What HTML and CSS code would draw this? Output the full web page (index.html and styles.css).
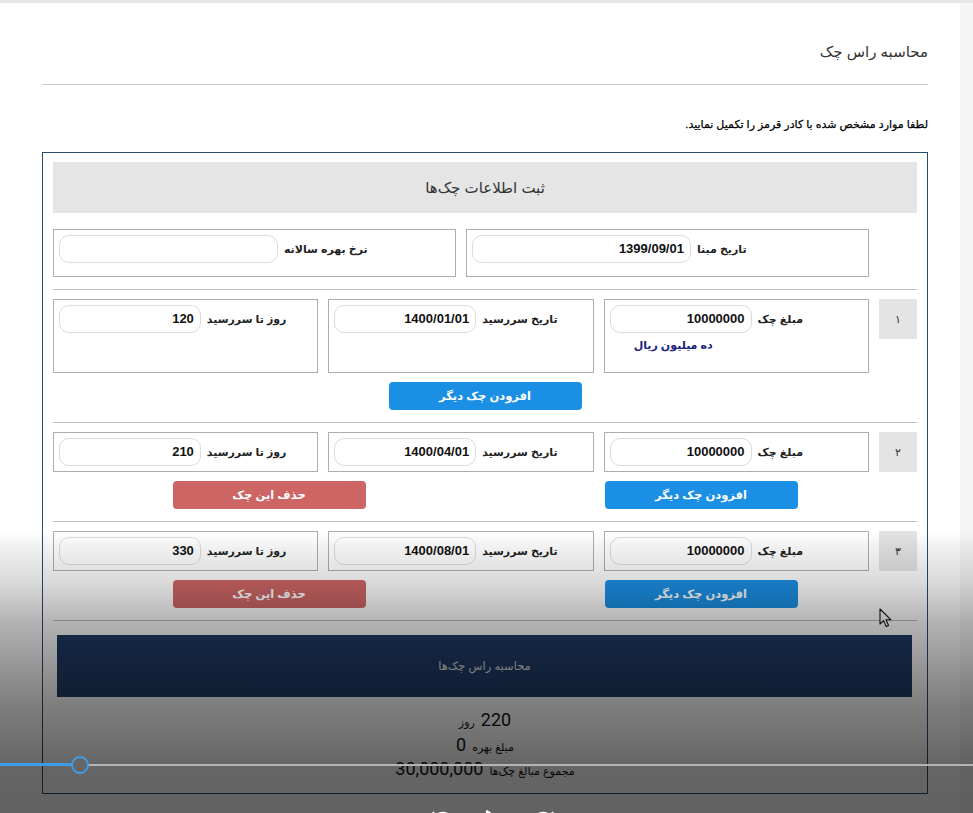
FILE: index.html
```html
<!DOCTYPE html>
<html lang="fa">
<head>
<meta charset="utf-8">
<title>محاسبه راس چک</title>
<link rel="stylesheet" href="styles.css">
</head>
<body>
<div class="screen">
  <div class="window">
    <main class="page" dir="rtl">
      <header class="page-head"><h1>محاسبه راس چک</h1></header>
      <p class="hint">لطفا موارد مشخص شده با کادر قرمز را تکمیل نمایید.</p>

      <section class="panel">
        <div class="panel-title">ثبت اطلاعات چک‌ها</div>

        <div class="row base-row">
          <div class="num-spacer"></div>
          <div class="field"><span class="label">تاریخ مبنا</span><span class="input">1399/09/01</span></div>
          <div class="field"><span class="label">نرخ بهره سالانه</span><span class="input"></span></div>
        </div>

        <div class="check">
          <div class="row check-row">
            <div class="num">۱</div>
            <div class="field stacked">
              <div class="field-line"><span class="label">مبلغ چک</span><span class="input">10000000</span></div>
              <div class="words">ده میلیون ریال</div>
            </div>
            <div class="field"><span class="label">تاریخ سررسید</span><span class="input">1400/01/01</span></div>
            <div class="field"><span class="label">روز تا سررسید</span><span class="input">120</span></div>
          </div>
          <div class="actions single"><button class="btn blue">افزودن چک دیگر</button></div>
        </div>

        <div class="check">
          <div class="row check-row">
            <div class="num">۲</div>
            <div class="field"><span class="label">مبلغ چک</span><span class="input">10000000</span></div>
            <div class="field"><span class="label">تاریخ سررسید</span><span class="input">1400/04/01</span></div>
            <div class="field"><span class="label">روز تا سررسید</span><span class="input">210</span></div>
          </div>
          <div class="actions pair">
            <div class="cell"><button class="btn blue">افزودن چک دیگر</button></div>
            <div class="cell"><button class="btn red">حذف این چک</button></div>
          </div>
        </div>

        <div class="check">
          <div class="row check-row">
            <div class="num">۳</div>
            <div class="field"><span class="label">مبلغ چک</span><span class="input">10000000</span></div>
            <div class="field"><span class="label">تاریخ سررسید</span><span class="input">1400/08/01</span></div>
            <div class="field"><span class="label">روز تا سررسید</span><span class="input">330</span></div>
          </div>
          <div class="actions pair">
            <div class="cell"><button class="btn blue">افزودن چک دیگر</button></div>
            <div class="cell"><button class="btn red">حذف این چک</button></div>
          </div>
        </div>

        <div class="calc-wrap"><button class="calc">محاسبه راس چک‌ها</button></div>

        <div class="results">
          <div class="res-line"><span class="val">220</span><span class="lbl">روز</span></div>
          <div class="res-line"><span class="lbl">مبلغ بهره</span><span class="val">0</span></div>
          <div class="res-line"><span class="lbl">مجموع مبالغ چک‌ها</span><span class="val">30,000,000</span></div>
        </div>
      </section>
    </main>
    <aside class="side-strip"></aside>
  </div>

  <svg class="cursor" width="14" height="20" viewBox="0 0 14 20">
    <path d="M1 1 L1 16 L4.6 12.6 L7.2 18.6 L9.6 17.6 L7 11.8 L12 11.8 Z" fill="#fff" stroke="#111" stroke-width="1.1" stroke-linejoin="round"/>
  </svg>

  <div class="overlay"></div>

  <div class="progress">
    <div class="track"></div>
    <div class="played"></div>
    <div class="knob"></div>
  </div>

  <div class="controls">
    <svg width="26" height="26" viewBox="0 0 26 26"><path d="M6 8 A9 9 0 1 1 4 13" fill="none" stroke="#fff" stroke-width="2"/><path d="M3 4 L6 9 L10 6" fill="none" stroke="#fff" stroke-width="2"/></svg>
    <svg width="26" height="26" viewBox="0 0 26 26"><path d="M7 3 L21 13 L7 23 Z" fill="none" stroke="#fff" stroke-width="2" stroke-linejoin="round"/></svg>
    <svg width="26" height="26" viewBox="0 0 26 26"><path d="M20 8 A9 9 0 1 0 22 13" fill="none" stroke="#fff" stroke-width="2"/><path d="M23 4 L20 9 L16 6" fill="none" stroke="#fff" stroke-width="2"/></svg>
  </div>
</div>
</body>
</html>
```
FILE: styles.css
```css
* { box-sizing: border-box; }
html, body { margin: 0; padding: 0; }
body {
  background: #fff;
  font-family: "Liberation Sans", "DejaVu Sans", sans-serif;
  color: #222;
}
.screen {
  position: relative;
  width: 973px;
  height: 813px;
  overflow: hidden;
  border-top: 3px solid #e6e6e6;
}
.window {
  display: flex;
  height: 100%;
}
.page {
  width: 960px;
  padding: 0 32px 0 42px;
}
.side-strip {
  flex: 1;
  background: #f5f5f5;
}
.page-head {
  height: 82px;
  padding-top: 37px;
  border-bottom: 1px solid #c8c8c8;
}
.page-head h1 {
  margin: 0;
  font-size: 15px;
  font-weight: normal;
  color: #333;
  line-height: 24px;
}
.hint {
  margin: 31px 0 0;
  font-size: 11px;
  font-weight: normal;
  color: #000;
  line-height: 16px;
  -webkit-text-stroke: 0.25px #000;
}
.panel {
  margin-top: 20px;
  border: 1px solid #2a4a70;
  padding: 9px 10px 10px;
}
.panel-title {
  height: 51px;
  background: #e5e5e5;
  display: flex;
  align-items: center;
  justify-content: center;
  font-size: 15px;
  color: #333;
}
.row {
  display: grid;
  gap: 10px;
}
.base-row {
  grid-template-columns: 38px 1fr 1fr;
  margin-top: 16px;
  padding-bottom: 12px;
  border-bottom: 1px solid #bdbdbd;
}
.base-row .field { min-height: 48px; }
.check-row {
  grid-template-columns: 38px 1fr 1fr 1fr;
}
.check {
  padding: 9px 0 12px;
  border-bottom: 1px solid #bdbdbd;
}
.field {
  border: 1px solid #adadad;
  padding: 5px;
  display: flex;
  justify-content: flex-end;
  align-items: flex-start;
  gap: 6px;
  min-height: 40px;
  background: #fff;
}
.field.stacked {
  flex-direction: column;
  align-items: stretch;
  justify-content: flex-start;
  gap: 0;
}
.field-line {
  display: flex;
  justify-content: flex-end;
  gap: 6px;
}
.label {
  font-size: 11px;
  font-weight: bold;
  color: #222;
  line-height: 28px;
  white-space: nowrap;
}
.input {
  width: 56%;
  height: 28px;
  border: 1px solid #dcdcdc;
  border-radius: 10px;
  padding: 0 6px;
  font-size: 13px;
  font-weight: bold;
  color: #111;
  line-height: 26px;
  text-align: right;
  direction: ltr;
  flex: none;
}
.words {
  margin: 3px 0 13px;
  padding-left: 24px;
  text-align: left;
  font-size: 11px;
  font-weight: bold;
  color: #1a237e;
  line-height: 18px;
}
.num {
  height: 40px;
  background: #e4e4e4;
  display: flex;
  align-items: center;
  justify-content: center;
  font-size: 11px;
  color: #333;
}
.actions {
  margin-top: 9px;
}
.actions.single {
  display: flex;
  justify-content: center;
}
.actions.pair {
  display: grid;
  grid-template-columns: 1fr 1fr;
}
.actions .cell {
  display: flex;
  justify-content: center;
}
.btn {
  width: 193px;
  height: 28px;
  border: none;
  border-radius: 4px;
  color: #fff;
  font-family: "Liberation Sans", "DejaVu Sans", sans-serif;
  font-size: 11.5px;
  font-weight: bold;
  padding: 0;
}
.btn.blue { background: #1b8fe4; }
.btn.red { background: #cd6565; }
.calc-wrap {
  padding: 14px 5px 0 4px;
}
.calc {
  width: 100%;
  height: 62px;
  border: none;
  background: #1f3a64;
  color: #d8d8d8;
  font-family: "Liberation Sans", "DejaVu Sans", sans-serif;
  font-size: 11.5px;
}
.results {
  margin-top: 12px;
  display: flex;
  flex-direction: column;
  align-items: center;
}
.res-line {
  height: 24.5px;
  display: flex;
  align-items: baseline;
  justify-content: center;
  gap: 6px;
  color: #111;
}
.res-line .val {
  font-size: 18px;
  font-family: "Roboto", "Liberation Sans", sans-serif;
}
.res-line .lbl {
  font-size: 11px;
}
.cursor {
  position: absolute;
  left: 879px;
  top: 605px;
}
.overlay {
  position: absolute;
  inset: 0;
  pointer-events: none;
  background: linear-gradient(180deg,
    rgba(0,0,0,0) 528px,
    rgba(0,0,0,0.06) 545px,
    rgba(0,0,0,0.15) 580px,
    rgba(0,0,0,0.3) 620px,
    rgba(0,0,0,0.5) 700px,
    rgba(0,0,0,0.6) 760px,
    rgba(0,0,0,0.62) 813px);
}
.progress {
  position: absolute;
  left: 0;
  top: 752px;
  width: 973px;
  height: 20px;
}
.track {
  position: absolute;
  left: 88px;
  right: 0;
  top: 9px;
  height: 2px;
  background: #b4b4b4;
}
.played {
  position: absolute;
  left: 0;
  width: 72px;
  top: 8px;
  height: 3px;
  background: #3e9ce6;
}
.knob {
  position: absolute;
  left: 71px;
  top: 1px;
  width: 18px;
  height: 18px;
  border: 2px solid #3e9ce6;
  border-radius: 50%;
}
.controls {
  position: absolute;
  top: 805px;
  left: 430px;
  display: flex;
  gap: 24px;
}
```
